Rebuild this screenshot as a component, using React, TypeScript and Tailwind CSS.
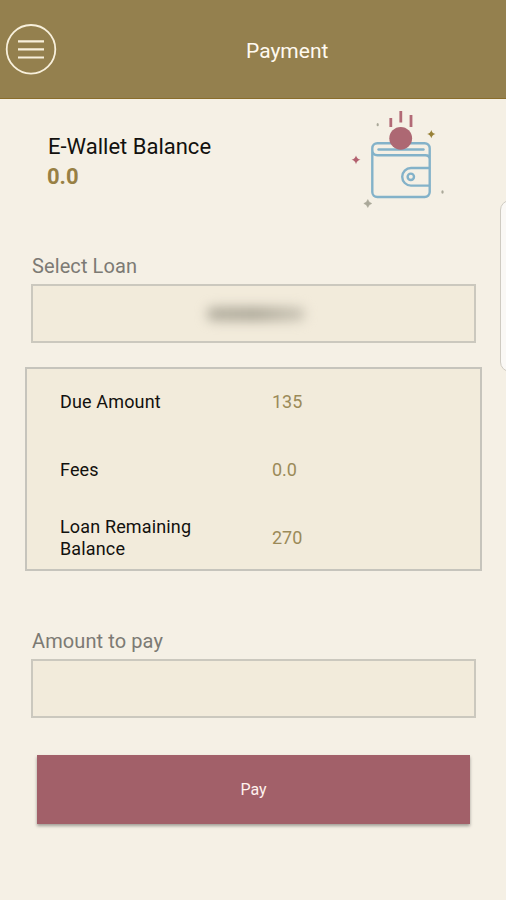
import type { ReactNode } from "react";

const loanDetails = [
  { label: "Due Amount", value: "135" },
  { label: "Fees", value: "0.0" },
  { label: "Loan Remaining Balance", value: "270" },
];

function MenuIcon() {
  return (
    <svg width="52" height="52" viewBox="0 0 52 52" fill="none" stroke="#f8f0dc">
      <circle cx="26" cy="26.300" r="24.300" strokeWidth={1.8} />
      <path d="M13 18.300h26M13 26.300h26M13 34.500h26" strokeWidth={2.200} />
    </svg>
  );
}

function WalletIcon() {
  return (
    <svg width="120" height="120" viewBox="0 0 120 120" fill="none">
      <g stroke="#83b2c9" strokeWidth={2.4} strokeLinecap="round">
        <path d="M32.300 50v-1.800a5 5 0 0 1 5-5h47.400a5 5 0 0 1 5 5V92a5 5 0 0 1-5 5H37.300a5 5 0 0 1-5-5V50c0 3.200 2 5.300 5 5.300h48c2.800 0 4.400 1.700 4.400 4" />
        <path d="M38.500 49.500h45" />
        <path d="M89 68H71a8.800 8.800 0 0 0 0 17.600h18" />
        <circle cx="70.800" cy="76.800" r="3.200" />
      </g>
      <circle cx="60.700" cy="38.300" r="11.400" fill="#ad6873" />
      <path d="M50.800 18v9M60.800 11v11.500M71 15v12" stroke="#b26a76" strokeWidth={2.8} />
      <path d="M16 55.500q.8 3.500 4.500 4.300-3.700.8-4.500 4.500-.8-3.700-4.500-4.500 3.700-.8 4.500-4.300z" fill="#b2606e" />
      <path d="M91.300 30q.8 3.300 4.200 4.100-3.400.8-4.200 4.200-.8-3.400-4.200-4.200 3.400-.8 4.200-4.100z" fill="#988137" />
      <path d="M27.800 99.500q.8 3.200 4 4-3.200.8-4 4-.8-3.200-4-4 3.200-.8 4-4z" fill="#aaa899" stroke="#aaa899" strokeWidth={0.5} />
      <ellipse cx="37.700" cy="24.700" rx="1.100" ry="1.600" fill="#aaa899" />
      <ellipse cx="102.500" cy="92" rx="1.200" ry="1.800" fill="#aaa899" />
    </svg>
  );
}

function Field({ label, children }: { label: string; children?: ReactNode }) {
  return (
    <div className="mx-[31px]">
      <div className="h-[31px] pl-px text-[20px] leading-[26px] tracking-[0.1px] text-[#7c7a74]">
        {label}
      </div>
      <div className="flex h-[59px] w-[445px] items-center justify-center border-2 border-[#cbc8be] bg-[#f2ebdb]">
        {children}
      </div>
    </div>
  );
}

export default function App() {
  return (
    <div className="relative h-[900px] w-[506px] overflow-hidden bg-[#f5f0e5] font-['Roboto',sans-serif]">
      <header className="flex h-[99px] items-center border-b border-[#8a6d2b] bg-[#94804e]">
        <button className="ml-[5px] w-[52px]" aria-label="Menu">
          <MenuIcon />
        </button>
        <h1 className="ml-[189px] pt-1 text-[21px] leading-[26px] text-[#fffaf0]">
          Payment
        </h1>
      </header>

      <section className="flex h-[154px] justify-between pt-px">
        <div className="ml-[47px] pt-[33px]">
          <p className="pl-px text-[22px] leading-[28px] text-[#12110e]">E-Wallet Balance</p>
          <p className="mt-0.5 text-[22px] leading-[28px] font-bold text-[#988044]">0.0</p>
        </div>
        <div className="mr-[46px]">
          <WalletIcon />
        </div>
      </section>

      <Field label="Select Loan">
        <span className="ml-1 h-3.5 w-[98px] rounded-md bg-gradient-to-r from-[#b5b0a1] via-[#ada899] to-[#cdc7b8] blur-[6px]" />
      </Field>

      <section className="mx-[25px] mt-6 h-[204px] w-[457px] border-2 border-[#c6c4bc] bg-[#f2ebdb]">
        <div className="-mt-px">
          {loanDetails.map((item) => (
            <div key={item.label} className="flex h-[68px] items-center pl-[33px] text-[18px] leading-[22px]">
              <span className="w-[212px] pr-[70px] tracking-[0.15px] text-[#12110e]">{item.label}</span>
              <span className="text-[#9b8a58]">{item.value}</span>
            </div>
          ))}
        </div>
      </section>

      <div className="mt-[57px]">
        <Field label="Amount to pay" />
      </div>

      <button className="mx-[37px] mt-[37px] block h-[69px] w-[433px] bg-[#a26069] text-[16px] text-[#fff1ed] shadow-[0_2px_3px_rgba(0,0,0,0.35)]">
        Pay
      </button>

      <div className="absolute top-[200px] left-[500px] h-[172px] w-10 rounded-[10px] border border-[#cfcbc2] bg-[#faf8f5]" />
    </div>
  );
}
